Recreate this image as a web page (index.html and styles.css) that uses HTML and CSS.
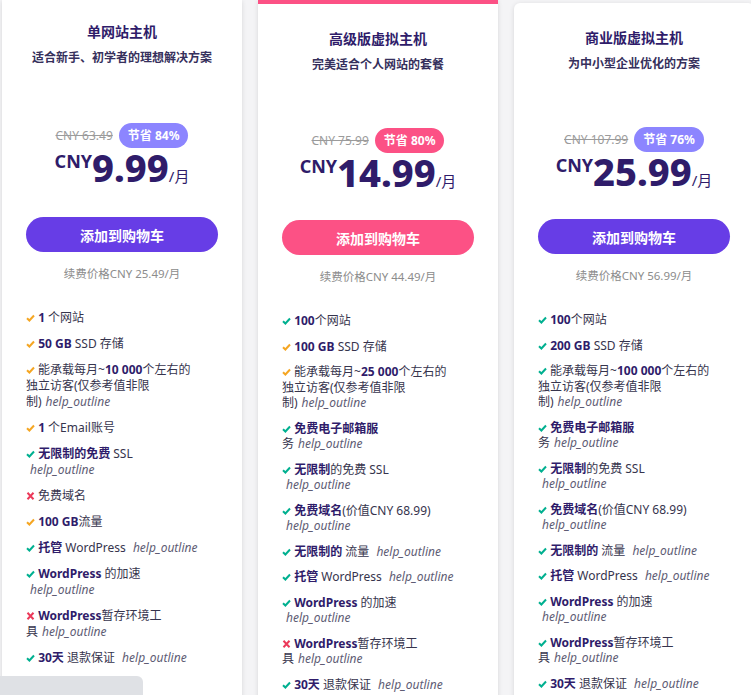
FILE: index.html
```html
<!DOCTYPE html>
<html lang="zh-CN">

<head>
    <meta charset="UTF-8">
    <meta name="viewport" content="width=device-width, initial-scale=1.0">
    <title>虚拟主机方案</title>
    <link rel="stylesheet" href="styles.css">
</head>

<body>
    <div class="plans">
        <!-- 单网站主机 -->
        <div class="plan plan-single">
            <div class="plan-head">
                <h3 class="plan-title">单网站主机</h3>
                <p class="plan-desc">适合新手、初学者的理想解决方案</p>
            </div>
            <div class="plan-old">
                <span class="old-price">CNY 63.49</span>
                <span class="save">节省 84%</span>
            </div>
            <div class="plan-price">
                <span class="cur">CNY</span><span class="amount">9.99</span><span class="per">/月</span>
            </div>
            <button class="cart">添加到购物车</button>
            <p class="renew">续费价格CNY 25.49/月</p>
            <ul class="features">
                <li><i class="ico ok-warn"></i> <b>1</b> 个网站</li>
                <li><i class="ico ok-warn"></i> <b>50 GB</b> SSD 存储</li>
                <li><i class="ico ok-warn"></i> 能承载每月~<b>10 000</b>个左右的<br>独立访客(仅参考值非限<br>制)<em class="help">help_outline</em></li>
                <li><i class="ico ok-warn"></i> <b>1</b> 个Email账号</li>
                <li><i class="ico ok"></i> <b>无限制的免费</b> SSL<br><em class="help">help_outline</em></li>
                <li><i class="ico no"></i> 免费域名</li>
                <li><i class="ico ok-warn"></i> <b>100 GB</b>流量</li>
                <li><i class="ico ok"></i> <b>托管</b> WordPress <em class="help">help_outline</em></li>
                <li><i class="ico ok"></i> <b>WordPress</b> 的加速<br><em class="help">help_outline</em></li>
                <li><i class="ico no"></i> <b>WordPress</b>暂存环境工<br>具<em class="help">help_outline</em></li>
                <li><i class="ico ok"></i> <b>30天</b> 退款保证 <em class="help">help_outline</em></li>
            </ul>
        </div>

        <!-- 高级版虚拟主机 -->
        <div class="plan plan-popular">
            <div class="plan-head">
                <h3 class="plan-title">高级版虚拟主机</h3>
                <p class="plan-desc">完美适合个人网站的套餐</p>
            </div>
            <div class="plan-old">
                <span class="old-price">CNY 75.99</span>
                <span class="save save-pink">节省 80%</span>
            </div>
            <div class="plan-price">
                <span class="cur">CNY</span><span class="amount">14.99</span><span class="per">/月</span>
            </div>
            <button class="cart cart-pink">添加到购物车</button>
            <p class="renew">续费价格CNY 44.49/月</p>
            <ul class="features">
                <li><i class="ico ok"></i> <b>100</b>个网站</li>
                <li><i class="ico ok-warn"></i> <b>100 GB</b> SSD 存储</li>
                <li><i class="ico ok-warn"></i> 能承载每月~<b>25 000</b>个左右的<br>独立访客(仅参考值非限<br>制)<em class="help">help_outline</em></li>
                <li><i class="ico ok"></i> <b>免费电子邮箱服</b><br>务<em class="help">help_outline</em></li>
                <li><i class="ico ok"></i> <b>无限制</b>的免费 SSL<br><em class="help">help_outline</em></li>
                <li><i class="ico ok"></i> <b>免费域名</b>(价值CNY 68.99)<br><em class="help">help_outline</em></li>
                <li><i class="ico ok"></i> <b>无限制的</b> 流量 <em class="help">help_outline</em></li>
                <li><i class="ico ok"></i> <b>托管</b> WordPress <em class="help">help_outline</em></li>
                <li><i class="ico ok"></i> <b>WordPress</b> 的加速<br><em class="help">help_outline</em></li>
                <li><i class="ico no"></i> <b>WordPress</b>暂存环境工<br>具<em class="help">help_outline</em></li>
                <li><i class="ico ok"></i> <b>30天</b> 退款保证 <em class="help">help_outline</em></li>
            </ul>
        </div>

        <!-- 商业版虚拟主机 -->
        <div class="plan plan-business">
            <div class="plan-head">
                <h3 class="plan-title">商业版虚拟主机</h3>
                <p class="plan-desc">为中小型企业优化的方案</p>
            </div>
            <div class="plan-old">
                <span class="old-price">CNY 107.99</span>
                <span class="save">节省 76%</span>
            </div>
            <div class="plan-price">
                <span class="cur">CNY</span><span class="amount">25.99</span><span class="per">/月</span>
            </div>
            <button class="cart">添加到购物车</button>
            <p class="renew">续费价格CNY 56.99/月</p>
            <ul class="features">
                <li><i class="ico ok"></i> <b>100</b>个网站</li>
                <li><i class="ico ok"></i> <b>200 GB</b> SSD 存储</li>
                <li><i class="ico ok"></i> 能承载每月~<b>100 000</b>个左右的<br>独立访客(仅参考值非限<br>制)<em class="help">help_outline</em></li>
                <li><i class="ico ok"></i> <b>免费电子邮箱服</b><br>务<em class="help">help_outline</em></li>
                <li><i class="ico ok"></i> <b>无限制</b>的免费 SSL<br><em class="help">help_outline</em></li>
                <li><i class="ico ok"></i> <b>免费域名</b>(价值CNY 68.99)<br><em class="help">help_outline</em></li>
                <li><i class="ico ok"></i> <b>无限制的</b> 流量 <em class="help">help_outline</em></li>
                <li><i class="ico ok"></i> <b>托管</b> WordPress <em class="help">help_outline</em></li>
                <li><i class="ico ok"></i> <b>WordPress</b> 的加速<br><em class="help">help_outline</em></li>
                <li><i class="ico ok"></i> <b>WordPress</b>暂存环境工<br>具<em class="help">help_outline</em></li>
                <li><i class="ico ok"></i> <b>30天</b> 退款保证 <em class="help">help_outline</em></li>
            </ul>
        </div>
    </div>

    <div class="chat-tab"></div>
</body>

</html>
```

FILE: styles.css
```css
body {
    margin: 0;
    background-color: #f4f4f6;
    font-family: "Noto Sans", "Noto Sans CJK SC", sans-serif;
    color: #36344d;
    overflow: hidden;
}

.plans {
    display: flex;
    align-items: flex-start;
    gap: 16px;
    padding-left: 2px;
}

.plan {
    flex: none;
    width: 240px;
    box-sizing: border-box;
    padding: 0 24px 30px;
    background-color: #fff;
    border-radius: 6px;
    box-shadow: 0 1px 5px rgba(0, 0, 0, 0.12);
    text-align: center;
}

.plan-single {
    border-radius: 0 0 6px 6px;
}

.plan-popular {
    border-top: 4px solid #fc5185;
    border-radius: 0 0 6px 6px;
}

.plan-business {
    margin-top: 3px;
}

.plan-head {
    padding-top: 26px;
    height: 95px;
    box-sizing: border-box;
}

.plan-single .plan-head {
    padding-top: 23px;
    height: 93px;
}

.plan-title {
    margin: 0;
    font-size: 14px;
    line-height: 18px;
    font-weight: 600;
    color: #2f1c6a;
}

.plan-desc {
    margin: 9px 0 0;
    font-size: 12px;
    line-height: 16px;
    font-weight: 600;
    color: #36305c;
}

.plan-old {
    margin-top: 29px;
    height: 25px;
    display: flex;
    justify-content: center;
    align-items: center;
    gap: 6px;
}

.plan-single .plan-old {
    margin-top: 30px;
}

.old-price {
    font-size: 12px;
    color: #9b9b9b;
    text-decoration: line-through;
}

.save {
    display: inline-block;
    padding: 0 9px;
    height: 25px;
    line-height: 25px;
    border-radius: 13px;
    background-color: #8c85ff;
    color: #fff;
    font-size: 12px;
    font-weight: 700;
}

.save-pink {
    background-color: #fc5185;
}

.plan-price {
    display: flex;
    justify-content: center;
    align-items: baseline;
    color: #2f1c6a;
    font-weight: 700;
}

.cur {
    align-self: flex-start;
    margin-top: 4px;
    font-size: 18px;
    line-height: 1;
}

.amount {
    font-size: 38px;
    line-height: 1;
    font-weight: 800;
}

.per {
    font-size: 15px;
    line-height: 1;
    font-weight: 400;
}

.cart {
    display: block;
    width: 100%;
    height: 35px;
    margin-top: 29px;
    border: none;
    border-radius: 18px;
    background-color: #673de6;
    color: #fff;
    font-family: inherit;
    font-size: 14px;
    font-weight: 700;
}

.plan-single .cart {
    margin-top: 31px;
}

.cart-pink {
    background-color: #fc5185;
}

.renew {
    margin: 14px 0 0;
    font-size: 11.5px;
    line-height: 16px;
    color: #8c8c8c;
}

.features {
    list-style: none;
    margin: 28px 0 0;
    padding: 0;
    text-align: left;
    font-size: 12px;
    line-height: 15.5px;
}

.features li {
    margin-bottom: 10px;
}

.plan-single .features {
    line-height: 16.25px;
}

.plan-single .features li {
    margin-bottom: 9.6px;
}

.features b {
    font-weight: 700;
    color: #2f1c6a;
}

.help {
    margin-left: 4px;
    font-style: italic;
    color: #5e5c74;
}

.ico {
    display: inline-block;
    width: 9px;
    height: 8px;
    background-repeat: no-repeat;
    background-position: center;
}

.ok {
    background-image: url("data:image/svg+xml,%3Csvg xmlns='http://www.w3.org/2000/svg' width='9' height='8' viewBox='0 0 9 8'%3E%3Cpath d='M1 4.2 L3.4 6.5 L8 1.5' fill='none' stroke='%2300b090' stroke-width='2'/%3E%3C/svg%3E");
}

.ok-warn {
    background-image: url("data:image/svg+xml,%3Csvg xmlns='http://www.w3.org/2000/svg' width='9' height='8' viewBox='0 0 9 8'%3E%3Cpath d='M1 4.2 L3.4 6.5 L8 1.5' fill='none' stroke='%23f5a623' stroke-width='2'/%3E%3C/svg%3E");
}

.no {
    background-image: url("data:image/svg+xml,%3Csvg xmlns='http://www.w3.org/2000/svg' width='9' height='8' viewBox='0 0 9 8'%3E%3Cpath d='M1.5 0.8 L7.5 7.2 M7.5 0.8 L1.5 7.2' fill='none' stroke='%23ec3a5a' stroke-width='2'/%3E%3C/svg%3E");
}

.chat-tab {
    position: fixed;
    left: 0;
    bottom: 0;
    width: 143px;
    height: 19px;
    background-color: #dfe1e5;
    border-top-right-radius: 6px;
}
```
